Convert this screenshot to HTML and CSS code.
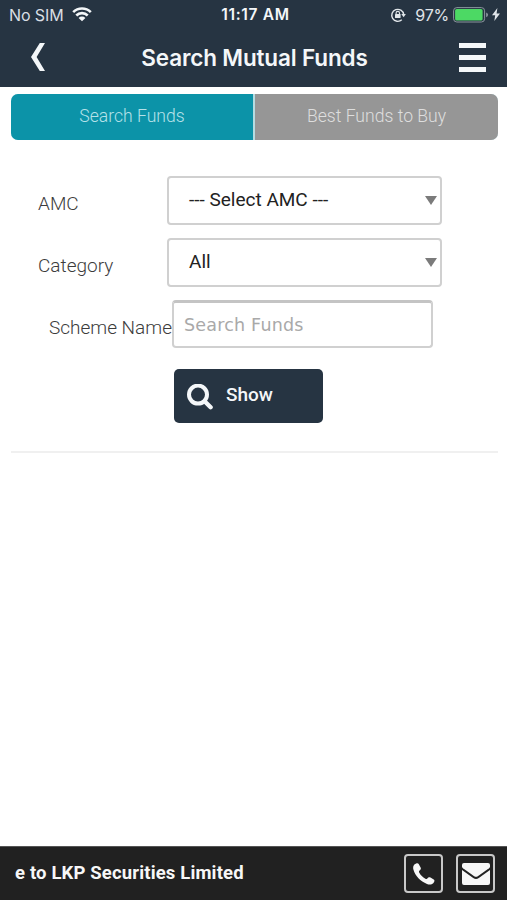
FILE: index.html
```html
<!DOCTYPE html>
<html lang="en">
  <head>
    <meta charset="UTF-8" />
    <meta name="viewport" content="width=device-width, initial-scale=1.0" />
    <title>Search Mutual Funds</title>
    <link rel="stylesheet" href="styles.css">
  </head>
  <body>
    <header class="header">
      <div class="status-bar">
        <div class="status-left">
          <span class="carrier">No SIM</span>
          <svg class="wifi" width="20" height="15" viewBox="0 0 20 15" fill="none" stroke="currentColor" stroke-width="2.6">
            <path d="M1.2 5.2a12.4 12.4 0 0 1 17.6 0" />
            <path d="M4.3 8.5a8 8 0 0 1 11.4 0" />
            <path d="M10 14.3l-3.4-3.4a4.8 4.8 0 0 1 6.8 0z" fill="currentColor" stroke="none" />
          </svg>
        </div>
        <span class="time">11:17 AM</span>
        <div class="status-right">
          <svg class="lock" width="16" height="16" viewBox="0 0 16 16" fill="none" stroke="currentColor">
            <path d="M11.8 12.8a6 6 0 1 1 1.9-5.3" stroke-width="1.4" />
            <path d="M11.3 7h4.6l-2.3 3.2z" fill="currentColor" stroke="none" />
            <path d="M6.1 7.3V6.1a1.7 1.7 0 0 1 3.4 0v1.2" stroke-width="1.1" />
            <rect x="5" y="7" width="5.6" height="4" rx=".6" fill="currentColor" stroke="none" />
          </svg>
          <span class="percent">97%</span>
          <svg class="battery" width="36" height="16" viewBox="0 0 36 16">
            <rect x=".6" y=".6" width="31" height="14.4" rx="3.2" fill="none" stroke="#8b959d" />
            <rect x="2.1" y="2.1" width="27.5" height="11.4" rx="1.6" fill="#4cd964" />
            <path d="M33.1 5.4q2 .6 2 2.4t-2 2.4z" fill="#8b959d" />
          </svg>
          <svg class="bolt" width="8" height="13" viewBox="0 0 8 13" fill="currentColor">
            <path d="M5.4 0L0 7.3h3.2L2.3 13 8 5.4H4.6z" />
          </svg>
        </div>
      </div>
      <div class="nav-bar">
        <svg class="back" width="14" height="30" viewBox="0 0 14 30" fill="currentColor">
          <path d="M8.8 1H14L5.6 15 14 29H8.8L0 15z" />
        </svg>
        <h1>Search Mutual Funds</h1>
        <div class="menu">
          <span></span>
          <span></span>
          <span></span>
        </div>
      </div>
    </header>

    <main class="content">
      <div class="tabs">
        <div class="tab selected">Search Funds</div>
        <div class="tab">Best Funds to Buy</div>
      </div>

      <form class="search-form">
        <div class="field">
          <label>AMC</label>
          <div class="select"><span>--- Select AMC ---</span></div>
        </div>
        <div class="field">
          <label>Category</label>
          <div class="select"><span>All</span></div>
        </div>
        <div class="field scheme">
          <label for="scheme-name">Scheme Name</label>
          <input type="text" id="scheme-name" class="search-input" placeholder="Search Funds" />
        </div>
        <button type="button" class="show-btn">
          <svg width="26" height="26" viewBox="0 0 26 26" fill="none" stroke="currentColor">
            <circle cx="11" cy="10.6" r="9" stroke-width="4" />
            <path d="M17.6 17.2l6 6" stroke-width="4.4" stroke-linecap="round" />
          </svg>
          <span>Show</span>
        </button>
      </form>
    </main>

    <footer class="footer">
      <span class="ticker">e to LKP Securities Limited</span>
      <div class="contact">
        <svg width="22" height="22" viewBox="0 0 22 22" fill="currentColor">
          <path d="M1.2 1.8C3 .3 4.8-.2 5.7 1L7.6 4.4C8.200 5.700 7.900 6.600 6.600 7.600 5.900 8.200 5.800 8.700 6.200 9.500 7.600 12.200 9.700 14.300 12.400 15.800 13.200 16.200 13.700 16.100 14.300 15.400 15.300 14.200 16.200 13.900 17.500 14.600L20.700 16.400C21.900 17.200 21.600 18.700 20.200 20.200 18.800 21.600 16.500 21.900 14 21 7.500 18.600 2.300 13.100.4 6.600-.1 4.800.1 2.900 1.200 1.800z" />
        </svg>
      </div>
      <div class="contact">
        <svg width="28" height="22" viewBox="0 0 28 22" fill="currentColor">
          <path d="M2 0h24q2 0 2 2v1.500q0 1-1 1.800L15.800 13.200q-1.800 1.200-3.600 0L1 5.300Q0 4.500 0 3.500V2Q0 0 2 0z" />
          <path d="M0 7l11.200 8q2.800 1.800 5.600 0L28 7v13q0 2-2 2H2q-2 0-2-2z" />
        </svg>
      </div>
    </footer>
  </body>
</html>
```
FILE: styles.css
```css
* {
  box-sizing: border-box;
}

body {
  display: flex;
  flex-direction: column;
  height: 100vh;
  margin: 0;
  overflow: hidden;
  background-color: #fff;
  color: #3c3c3c;
  font-family: Roboto, "Liberation Sans", sans-serif;
}

svg {
  display: block;
  flex-shrink: 0;
}

.header {
  height: 87px;
  background-color: #263442;
  color: #f4f7f9;
  font-family: Inter, "Liberation Sans", sans-serif;
}

.status-bar {
  display: grid;
  grid-template-columns: 1fr auto 1fr;
  align-items: center;
  height: 29px;
  padding: 0 7px 0 9px;
  font-size: 16px;
}

.status-left,
.status-right {
  display: flex;
  align-items: center;
}

.status-left {
  gap: 8px;
  color: #d9dfe4;
}

.carrier {
  letter-spacing: -0.1px;
}

.status-right {
  justify-content: flex-end;
  color: #e0e5e9;
}

.wifi {
  color: #f4f7f9;
}

.time {
  padding-left: 2px;
  font-size: 15.5px;
  font-weight: 600;
  letter-spacing: 0.7px;
}

.percent {
  margin: 0 4px 0 9px;
  letter-spacing: -0.2px;
}

.bolt {
  margin-left: 3px;
}

.nav-bar {
  display: flex;
  align-items: center;
  justify-content: space-between;
  height: 56px;
  padding: 0 21px 0 31px;
}

.nav-bar h1 {
  margin: 0 0 0 5px;
  font-size: 22.5px;
  font-weight: 600;
  letter-spacing: -0.15px;
  white-space: nowrap;
}

.menu {
  display: flex;
  flex-direction: column;
  gap: 7px;
  width: 27px;
}

.menu span {
  height: 5px;
  background-color: #f4f7f9;
}

.content {
  flex: 1;
  padding: 7px 9px 0 11px;
}

.tabs {
  display: flex;
  gap: 2px;
  height: 46px;
  border-radius: 7px;
  overflow: hidden;
  background-color: #b5dce1;
}

.tab {
  flex: 1;
  background-color: #969696;
  color: #dedede;
  font-size: 17.6px;
  font-weight: 300;
  line-height: 44px;
  text-align: center;
}

.tab.selected {
  flex: 0 0 242px;
  background-color: #0c93a8;
  color: #b5e1e8;
}

.search-form {
  display: flex;
  flex-direction: column;
  height: 313px;
  padding-top: 36px;
  border-bottom: 2px solid #f0f0f0;
}

.field {
  display: flex;
  align-items: center;
  height: 49px;
  margin-bottom: 13px;
  padding-left: 27px;
}

.field label {
  width: 129px;
  padding-top: 5px;
  font-size: 19px;
  font-weight: 300;
  white-space: nowrap;
}

.select {
  display: flex;
  align-items: center;
  justify-content: space-between;
  width: 275px;
  height: 49px;
  padding: 0 3px 2px 20px;
  border: 2px solid #d0d0d0;
  border-radius: 4px;
  color: #222;
  font-size: 19px;
}

.select::after {
  content: "";
  margin-top: 2px;
  border: 6.5px solid transparent;
  border-top: 9px solid #7b7b7b;
  border-bottom: 0;
}

.field.scheme {
  height: 48px;
  margin-bottom: 21px;
  padding-left: 38px;
}

.field.scheme label {
  width: 123px;
  padding-top: 7px;
}

.search-input {
  width: 261px;
  height: 48px;
  padding: 0 10px;
  border: 2px solid #d0d0d0;
  border-top: 3px solid #c4c4c4;
  border-radius: 4px;
  color: #333;
  font-family: "DejaVu Sans", sans-serif;
  font-size: 17.5px;
  letter-spacing: 0.2px;
}

.search-input::placeholder {
  color: #a9a9a9;
}

.show-btn {
  display: flex;
  align-items: center;
  gap: 13px;
  width: 149px;
  height: 54px;
  margin-left: 163px;
  padding: 0 13px;
  border: none;
  border-radius: 5px;
  background-color: #263442;
  color: #f4f7f9;
  font-family: inherit;
  font-size: 19px;
  font-weight: 500;
}

.show-btn svg {
  margin-top: 2px;
}

.show-btn span {
  margin-top: -3px;
}

.footer {
  display: flex;
  align-items: center;
  gap: 13px;
  height: 54px;
  padding: 0 12px 0 15px;
  border-top: 1px solid #555;
  background-color: #212121;
  color: #f7f7f7;
}

.ticker {
  flex: 1;
  margin-bottom: 2px;
  font-size: 18.5px;
  font-weight: 700;
  letter-spacing: 0.15px;
}

.contact {
  display: flex;
  align-items: center;
  justify-content: center;
  width: 39px;
  height: 39px;
  border: 2px solid #c8c8c8;
  border-radius: 4px;
}
```
